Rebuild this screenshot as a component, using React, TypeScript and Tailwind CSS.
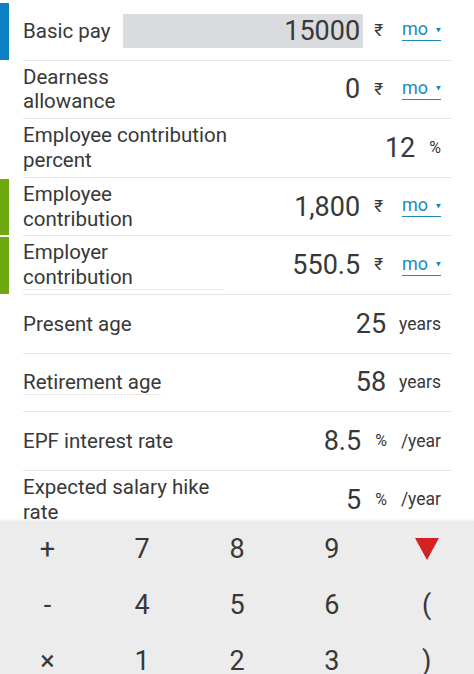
import React from "react";

type Row = {
  label: string[];
  bar?: "blue" | "green";
  value: string;
  input?: boolean;
  unit: string;
  period?: "mo" | "/year";
  underline?: "wide" | "text";
};

const rows: Row[] = [
  { label: ["Basic pay"], bar: "blue", value: "15000", input: true, unit: "₹", period: "mo" },
  { label: ["Dearness", "allowance"], value: "0", unit: "₹", period: "mo" },
  { label: ["Employee contribution", "percent"], value: "12", unit: "%" },
  { label: ["Employee", "contribution"], bar: "green", value: "1,800", unit: "₹", period: "mo" },
  { label: ["Employer", "contribution"], bar: "green", value: "550.5", unit: "₹", period: "mo", underline: "wide" },
  { label: ["Present age"], value: "25", unit: "years" },
  { label: ["Retirement age"], value: "58", unit: "years", underline: "text" },
  { label: ["EPF interest rate"], value: "8.5", unit: "%", period: "/year" },
  { label: ["Expected salary hike", "rate"], value: "5", unit: "%", period: "/year" },
];

const keys = [
  ["+", "7", "8", "9", "▼"],
  ["-", "4", "5", "6", "("],
  ["×", "1", "2", "3", ")"],
];

function Unit({ unit }: { unit: string }) {
  if (unit === "₹") return <span className="ml-[14px] text-[17px] text-[#383838]">₹</span>;
  if (unit === "%") return <span className="ml-[14px] text-[16px] text-[#383838]">%</span>;
  return <span className="ml-[13px] text-[17.5px] text-[#383838]">years</span>;
}

function Period({ period }: { period?: "mo" | "/year" }) {
  if (!period) return null;
  if (period === "mo")
    return (
      <span className="ml-[19px] flex items-center gap-[8px] border-b border-[#1f8ab8] text-[18px] leading-[18px] text-[#1f8ab8] pb-[2px]">
        <span>mo</span>
        <svg width="5" height="5" viewBox="0 0 5 5" className="mt-[2px]">
          <polygon points="0,0 5,0 2.5,4.5" fill="#1f8ab8" />
        </svg>
      </span>
    );
  return <span className="ml-[14px] text-[17.5px] text-[#383838]">/year</span>;
}

function FormRow({ r }: { r: Row }) {
  const barColor =
    r.bar === "blue" ? "bg-[#0e7fc1]" : r.bar === "green" ? "bg-[#6fa912]" : "bg-transparent";
  const labelUnderline =
    r.underline === "wide"
      ? "w-[201px] border-b border-[#ebebeb]"
      : r.underline === "text"
      ? "border-b border-[#ebebeb]"
      : "";
  return (
    <div className="flex h-[58.6px]">
      <div className={`w-[9px] my-[1px] shrink-0 ${barColor}`} />
      <div className="ml-[14px] mr-[22px] flex flex-1 items-center border-b-[1.5px] border-[#e6e6e6]">
        <div className={`text-[20.5px] leading-[24.5px] text-[#383838] ${labelUnderline}`}>
          {r.label.map((l, i) => (
            <div key={i} className="whitespace-nowrap">
              {l}
            </div>
          ))}
        </div>
        <div className="ml-auto flex items-center pr-[11px]">
          {r.input ? (
            <div className="flex h-[34px] w-[240px] items-center justify-end bg-[#d9dbde] pr-[3px] text-[27px] text-[#383838] -mr-[3px]">
              {r.value}
            </div>
          ) : (
            <span className="text-[27px] leading-[30px] text-[#383838]">{r.value}</span>
          )}
          <Unit unit={r.unit} />
          <Period period={r.period} />
        </div>
      </div>
    </div>
  );
}

export default function App() {
  return (
    <div
      className="flex h-[674px] w-full flex-col overflow-hidden bg-white"
      style={{ fontFamily: "Roboto, 'Noto Sans', sans-serif" }}
    >
      <div className="h-[521px] shrink-0 overflow-hidden pt-[2px]">
        {rows.map((r, i) => (
          <FormRow key={i} r={r} />
        ))}
      </div>
      <div className="shrink-0 bg-[#ececec] shadow-[0_-1px_2px_rgba(0,0,0,0.08)]">
        {keys.map((row, i) => (
          <div key={i} className="grid h-[56px] grid-cols-5">
            {row.map((k) => (
              <div key={k} className="flex items-center justify-center text-[27px] text-[#383838]">
                {k === "▼" ? (
                  <svg width="24" height="22" viewBox="0 0 24 22">
                    <polygon points="0,0 24,0 12,22" fill="#d42222" />
                  </svg>
                ) : (
                  k
                )}
              </div>
            ))}
          </div>
        ))}
      </div>
    </div>
  );
}
